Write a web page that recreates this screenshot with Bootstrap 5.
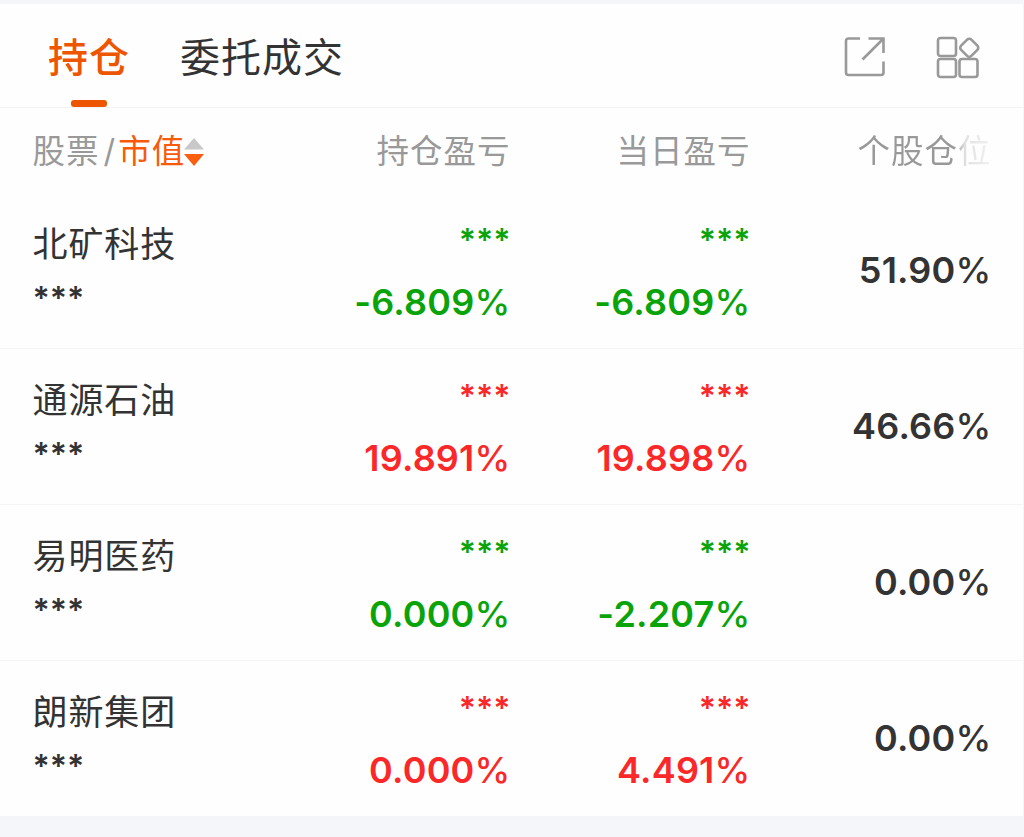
<!DOCTYPE html>
<html lang="zh-CN">
<head>
    <meta charset="UTF-8">
    <meta name="viewport" content="width=device-width, initial-scale=1.0">
    <title>持仓</title>
    <link href="https://cdn.jsdelivr.net/npm/bootstrap@5.3.0/dist/css/bootstrap.min.css" rel="stylesheet">
    <style>
        body {
            background-color: #f5f6f9;
            color: #333;
            font-family: Inter, "Noto Sans CJK SC", sans-serif;
            overflow: hidden;
        }
        .panel {
            margin-top: 4px;
            background: #fefefe;
            border-right: 1px solid #f5f6f9;
        }
        .tabs {
            height: 104px;
            padding: 0 43px 0 48px;
            border-bottom: 1px solid #f3f3f5;
        }
        .tabs .nav-link {
            height: 103px;
            padding: 24px 0 0;
            font-size: 40px;
            line-height: 60px;
            letter-spacing: 1px;
            color: #333;
        }
        .tabs .nav-link.active {
            margin-right: 50px;
            color: #ee5500;
            font-weight: 500;
        }
        .tab-line {
            width: 36px;
            height: 7px;
            margin: 12px auto 0;
            border-radius: 3px;
            background: #ee5500;
        }
        .tools {
            gap: 50px;
            padding-top: 3px;
        }
        .grid-line {
            display: grid;
            grid-template-columns: 269px 209px 240px 241px;
            padding-left: 32.5px;
        }
        .titles {
            height: 84px;
            padding-top: 2px;
            font-size: 32.5px;
            line-height: 84px;
            letter-spacing: 1px;
            color: #999;
        }
        .slash {
            margin: 0 2px 0 4px;
        }
        .sort-name {
            margin-right: -1px;
            color: #f85a0c;
        }
        .fade-title {
            background: linear-gradient(to right, #999 0, #999 72%, #e0e0e0 80%, #f2f2f2 100%);
            -webkit-background-clip: text;
            background-clip: text;
            color: transparent;
        }
        .stock {
            height: 156px;
            border-bottom: 1px solid #f5f5f7;
            font-weight: 600;
        }
        .stock:first-child {
            height: 157px;
            padding-top: 1px;
        }
        .stock-name {
            margin-top: 25px;
            font-size: 35px;
            font-weight: 400;
            line-height: 52px;
            letter-spacing: 0.9px;
        }
        .stars {
            padding-top: 4px;
            font-size: 32px;
            line-height: 40px;
        }
        .name-stars {
            margin-top: 5px;
        }
        .num {
            font-size: 36px;
            line-height: 44px;
            letter-spacing: 0.2px;
        }
        .sign {
            font-weight: 500;
        }
        .pct {
            margin-top: 19px;
        }
        .share {
            margin-top: -1px;
        }
        .down { color: #0aa30a; }
        .up { color: #fa2828; }
    </style>
</head>
<body>
    <div class="panel">
        <div class="tabs d-flex justify-content-between">
            <nav class="nav flex-nowrap">
                <a class="nav-link active" href="#">持仓<div class="tab-line"></div></a>
                <a class="nav-link" href="#">委托成交</a>
            </nav>
            <div class="tools d-flex align-items-center">
                <svg width="42" height="42" viewBox="0 0 42 42" fill="none" stroke="#999" stroke-width="2.6">
                    <path d="M16 2.5H4.5Q2 2.5 2 5V36.5Q2 39 4.5 39H37Q39.5 39 39.5 36.5V25.5"/>
                    <path d="M24.5 2.5H39.5V17M39 3L18.5 23.5"/>
                </svg>
                <svg width="44" height="44" viewBox="0 0 44 44" fill="none" stroke="#999" stroke-width="2.6">
                    <rect x="2" y="3" width="18" height="18" rx="2.5"/>
                    <rect x="2" y="24" width="18" height="18" rx="2.5"/>
                    <rect x="23.5" y="24" width="18" height="18" rx="2.5"/>
                    <rect x="26" y="5.5" width="14.5" height="14.5" rx="3" transform="rotate(45 33.25 12.75)"/>
                </svg>
            </div>
        </div>

        <div class="grid-line titles">
            <div class="d-flex align-items-center">股票<span class="slash">/</span><span class="sort-name">市值</span>
                <svg width="20" height="28" viewBox="0 0 20 28">
                    <path d="M10 0L20 11.5H0Z" fill="#c8c8c8"/>
                    <path d="M0 16H20L10 28Z" fill="#fa5f10"/>
                </svg>
            </div>
            <div class="text-end">持仓盈亏</div>
            <div class="text-end">当日盈亏</div>
            <div class="text-end"><span class="fade-title">个股仓位</span></div>
        </div>

        <div id="stocks"></div>
    </div>

    <script src="https://cdn.jsdelivr.net/npm/bootstrap@5.3.0/dist/js/bootstrap.bundle.min.js"></script>
    <script>
        const stocks = [
            { name: "北矿科技", total: "-6.809", day: "-6.809", share: "51.90", cls: "down" },
            { name: "通源石油", total: "19.891", day: "19.898", share: "46.66", cls: "up" },
            { name: "易明医药", total: "0.000", day: "-2.207", share: "0.00", cls: "down" },
            { name: "朗新集团", total: "0.000", day: "4.491", share: "0.00", cls: "up" }
        ];

        const percent = value => `${value}<span class="sign">%</span>`;

        document.getElementById("stocks").innerHTML = stocks.map(s => `
            <div class="grid-line stock">
                <div>
                    <div class="stock-name">${s.name}</div>
                    <div class="stars name-stars">***</div>
                </div>
                <div class="text-end pt-4 ${s.cls}">
                    <div class="stars">***</div>
                    <div class="num pct">${percent(s.total)}</div>
                </div>
                <div class="text-end pt-4 ${s.cls}">
                    <div class="stars">***</div>
                    <div class="num pct">${percent(s.day)}</div>
                </div>
                <div class="num share text-end align-self-center">${percent(s.share)}</div>
            </div>
        `).join("");
    </script>
</body>
</html>
